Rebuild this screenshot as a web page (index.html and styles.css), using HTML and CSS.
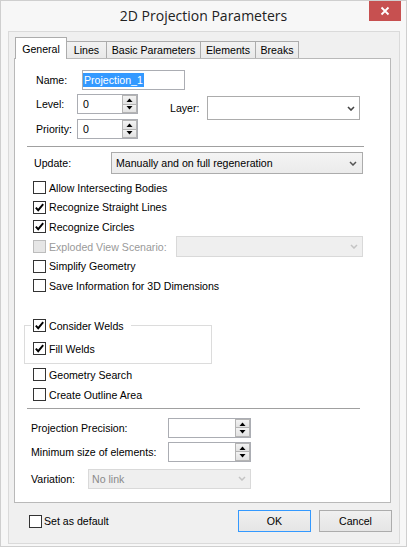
FILE: index.html
```html
<!DOCTYPE html>
<html>
<head>
<meta charset="utf-8">
<title>2D Projection Parameters</title>
<link rel="stylesheet" href="styles.css">
</head>
<body>
<div class="window">
  <div class="titlebar">
    <span></span>
    <div class="title">2D Projection Parameters</div>
    <div class="close"><svg width="10" height="10" viewBox="0 0 10 10"><path d="M1.5 1.5L8.5 8.5M8.5 1.5L1.5 8.5" stroke="#fff" stroke-width="1.8" fill="none"/></svg></div>
  </div>
  <div class="client">
    <div class="tabs">
      <div class="tab tab-active w-general">General</div>
      <div class="tab w-lines">Lines</div>
      <div class="tab w-basic">Basic Parameters</div>
      <div class="tab w-elements">Elements</div>
      <div class="tab w-breaks">Breaks</div>
    </div>
    <div class="panel">
      <div class="row-name">
        <span class="lbl-name">Name:</span>
        <div class="text-input name-input"><span class="sel-text">Projection_1</span></div>
      </div>
      <div class="lp-block">
        <div class="lp-left">
          <div class="lp-row">
            <span class="lbl-lp">Level:</span>
            <div class="spin-input w-lvl">
              <span class="val">0</span>
              <div class="spin">
                <div class="spin-btn"><svg width="7" height="4" viewBox="0 0 7 4"><path d="M0.5 4L3.5 0.5L6.5 4Z" fill="#000"/></svg></div>
                <div class="spin-btn"><svg width="7" height="4" viewBox="0 0 7 4"><path d="M0.5 0L3.5 3.5L6.5 0Z" fill="#000"/></svg></div>
              </div>
            </div>
          </div>
          <div class="lp-row">
            <span class="lbl-lp">Priority:</span>
            <div class="spin-input w-lvl">
              <span class="val">0</span>
              <div class="spin">
                <div class="spin-btn"><svg width="7" height="4" viewBox="0 0 7 4"><path d="M0.5 4L3.5 0.5L6.5 4Z" fill="#000"/></svg></div>
                <div class="spin-btn"><svg width="7" height="4" viewBox="0 0 7 4"><path d="M0.5 0L3.5 3.5L6.5 0Z" fill="#000"/></svg></div>
              </div>
            </div>
          </div>
        </div>
        <div class="layer">
          <span class="lbl-layer">Layer:</span>
          <div class="combo w-layer">
            <span></span>
            <svg width="8" height="5" viewBox="0 0 8 5"><path d="M1 1L4 4L7 1" stroke="#444" stroke-width="1.6" fill="none"/></svg>
          </div>
        </div>
      </div>
      <div class="sep sep-top"></div>
      <div class="update-row">
        <span class="lbl-update">Update:</span>
        <div class="combo dropdown w-update">
          <span>Manually and on full regeneration</span>
          <svg width="8" height="5" viewBox="0 0 8 5"><path d="M1 1L4 4L7 1" stroke="#555" stroke-width="1.5" fill="none"/></svg>
        </div>
      </div>
      <div class="checks">
        <div class="cb-row"><span class="cb"></span><span>Allow Intersecting Bodies</span></div>
        <div class="cb-row"><span class="cb"><svg width="11" height="11" viewBox="0 0 11 11"><path d="M1.8 5.6L4.2 8.2L9.2 2.2" stroke="#000" stroke-width="1.9" fill="none"/></svg></span><span>Recognize Straight Lines</span></div>
        <div class="cb-row"><span class="cb"><svg width="11" height="11" viewBox="0 0 11 11"><path d="M1.8 5.6L4.2 8.2L9.2 2.2" stroke="#000" stroke-width="1.9" fill="none"/></svg></span><span>Recognize Circles</span></div>
        <div class="cb-row disabled"><span class="cb"></span><span class="lbl-exploded">Exploded View Scenario:</span>
          <div class="combo dis-combo w-exploded"><span></span><svg width="8" height="5" viewBox="0 0 8 5"><path d="M1 1L4 4L7 1" stroke="#c4c4c4" stroke-width="1.5" fill="none"/></svg></div>
        </div>
        <div class="cb-row"><span class="cb"></span><span>Simplify Geometry</span></div>
        <div class="cb-row"><span class="cb"></span><span>Save Information for 3D Dimensions</span></div>
      </div>
      <fieldset class="group">
        <legend class="group-legend"><div class="cb-row cb-row-plain"><span class="cb"><svg width="11" height="11" viewBox="0 0 11 11"><path d="M1.8 5.6L4.2 8.2L9.2 2.2" stroke="#000" stroke-width="1.9" fill="none"/></svg></span><span>Consider Welds</span></div></legend>
        <div class="cb-row cb-row-plain fill-row"><span class="cb"><svg width="11" height="11" viewBox="0 0 11 11"><path d="M1.8 5.6L4.2 8.2L9.2 2.2" stroke="#000" stroke-width="1.9" fill="none"/></svg></span><span>Fill Welds</span></div>
      </fieldset>
      <div class="checks2">
        <div class="cb-row h20"><span class="cb"></span><span>Geometry Search</span></div>
        <div class="cb-row h20"><span class="cb"></span><span>Create Outline Area</span></div>
      </div>
      <div class="sep sep-bottom"></div>
      <div class="field-row fr-precision">
        <span class="lbl-field">Projection Precision:</span>
        <div class="spin-input w-prec">
          <span class="val"></span>
          <div class="spin">
            <div class="spin-btn"><svg width="7" height="4" viewBox="0 0 7 4"><path d="M0.5 4L3.5 0.5L6.5 4Z" fill="#000"/></svg></div>
            <div class="spin-btn"><svg width="7" height="4" viewBox="0 0 7 4"><path d="M0.5 0L3.5 3.5L6.5 0Z" fill="#000"/></svg></div>
          </div>
        </div>
      </div>
      <div class="field-row fr-min">
        <span class="lbl-field">Minimum size of elements:</span>
        <div class="spin-input w-prec">
          <span class="val"></span>
          <div class="spin">
            <div class="spin-btn"><svg width="7" height="4" viewBox="0 0 7 4"><path d="M0.5 4L3.5 0.5L6.5 4Z" fill="#000"/></svg></div>
            <div class="spin-btn"><svg width="7" height="4" viewBox="0 0 7 4"><path d="M0.5 0L3.5 3.5L6.5 0Z" fill="#000"/></svg></div>
          </div>
        </div>
      </div>
      <div class="field-row fr-var">
        <span class="lbl-var">Variation:</span>
        <div class="combo dis-combo w-var"><span class="dis-text">No link</span><svg width="8" height="5" viewBox="0 0 8 5"><path d="M1 1L4 4L7 1" stroke="#c4c4c4" stroke-width="1.5" fill="none"/></svg></div>
      </div>
    </div>
    <div class="footer">
      <div class="cb-row cb-row-plain footer-cb"><span class="cb"></span><span>Set as default</span></div>
      <div class="spacer"></div>
      <div class="btn btn-default">OK</div>
      <div class="btn">Cancel</div>
    </div>
  </div>
</div>
</body>
</html>
```
FILE: styles.css
```css
* { box-sizing: border-box; }
html, body { margin: 0; padding: 0; }
body {
  width: 407px;
  height: 547px;
  overflow: hidden;
  background: #f7f7f7;
  font-family: "Liberation Sans", Arial, sans-serif;
  font-size: 10.6px;
  color: #000;
}
.window {
  width: 407px;
  height: 547px;
  border: 1px solid #cfcfcf;
  background: #f7f7f7;
  display: flex;
  flex-direction: column;
}
.titlebar {
  flex: none;
  height: 30px;
  display: grid;
  grid-template-columns: 1fr auto 1fr;
}
.title {
  font-family: "Open Sans", "Noto Sans", sans-serif;
  font-size: 14px;
  color: #222;
  line-height: 30px;
  white-space: nowrap;
}
.close {
  justify-self: end;
  width: 32px;
  height: 20px;
  margin-right: 5px;
  background: #c75050;
  display: flex;
  align-items: center;
  justify-content: center;
}
.client {
  flex: none;
  margin: 0 6px 2px 7px;
  height: 513px;
  background: #f0f0f0;
  border: 1px solid #dadada;
  display: flex;
  flex-direction: column;
}
.tabs {
  flex: none;
  height: 26px;
  display: flex;
  align-items: flex-end;
  padding-left: 6px;
}
.tab {
  height: 17px;
  border: 1px solid #acacac;
  border-bottom: none;
  margin-right: -1px;
  background: linear-gradient(#f2f2f2, #e9e9e9);
  display: flex;
  align-items: center;
  justify-content: center;
  white-space: nowrap;
}
.tab-active {
  position: relative;
  z-index: 1;
  height: 22px;
  margin-bottom: -1px;
  background: #fff;
}
.w-general { width: 52px; }
.w-lines { width: 41px; }
.w-basic { width: 95px; }
.w-elements { width: 56px; }
.w-breaks { width: 44px; }

.panel {
  flex: none;
  margin-left: 5px;
  width: 377px;
  height: 445px;
  border: 1px solid #b9b9b9;
  background: #fff;
}

.row-name {
  display: flex;
  align-items: center;
  height: 20px;
  margin: 11px 0 0 21px;
}
.lbl-name { width: 46px; }
.text-input {
  height: 20px;
  border: 1px solid #abadb3;
  background: #fff;
}
.name-input {
  width: 103px;
  display: flex;
  align-items: center;
  padding-left: 0;
}
.sel-text {
  background: #3399ff;
  color: #fff;
  line-height: 14px;
  padding: 0 1px 0 1px;
}

.lp-block {
  display: flex;
  align-items: flex-start;
  margin: 4px 0 0 21px;
}
.lp-left {
  display: flex;
  flex-direction: column;
  gap: 5px;
}
.lp-row {
  display: flex;
  align-items: center;
  height: 20px;
}
.lbl-lp { width: 41px; }
.spin-input {
  height: 20px;
  border: 1px solid #abadb3;
  background: #fff;
  display: flex;
}
.w-lvl { width: 61px; }
.w-prec { width: 83px; }
.val {
  flex: 1;
  align-self: center;
  padding-left: 5px;
}
.spin {
  width: 15px;
  display: flex;
  flex-direction: column;
}
.spin-btn {
  flex: 1;
  border: 1px solid #b4b4b4;
  background: linear-gradient(#f3f3f3, #e2e2e2);
  display: flex;
  align-items: center;
  justify-content: center;
}
.spin-btn + .spin-btn { border-top: none; }

.layer {
  display: flex;
  align-items: center;
  margin: 2px 0 0 32px;
}
.lbl-layer { width: 37px; }
.combo {
  display: flex;
  align-items: center;
  justify-content: space-between;
  border: 1px solid #acacac;
  background: #fff;
  padding: 0 4px 0 3px;
  white-space: nowrap;
}
.w-layer { width: 153px; height: 24px; }

.sep {
  height: 0;
  border-top: 1px solid #a0a0a0;
  margin-left: 12px;
}
.sep-top { width: 337px; margin-top: 7px; }
.sep-bottom { width: 333px; margin-top: 3px; }

.update-row {
  display: flex;
  align-items: center;
  height: 22px;
  margin: 5px 0 0 19px;
}
.lbl-update { width: 77px; }
.dropdown {
  background: linear-gradient(#f4f4f4, #ebebeb);
  padding: 0 5px 0 4px;
}
.w-update { width: 252px; height: 22px; }

.checks { margin-top: 4px; }
.cb-row {
  display: flex;
  align-items: center;
  height: 19.6px;
  margin-left: 18px;
  white-space: nowrap;
}
.cb-row.h20 { height: 20px; }
.cb-row-plain { margin-left: 0; }
.cb {
  flex: none;
  width: 13px;
  height: 13px;
  border: 1px solid #333;
  background: #fff;
  margin-right: 3px;
  display: flex;
  align-items: center;
  justify-content: center;
}
.disabled { color: #9a9a9a; }
.disabled .cb { border-color: #bcbcbc; background: #e6e6e6; }
.lbl-exploded { width: 127px; }
.dis-combo {
  border-color: #d9d9d9;
  background: #efefef;
}
.w-exploded { width: 187px; height: 21px; }

.group {
  margin: 20.4px 0 0 9px;
  width: 188px;
  min-width: 0;
  border: 1px solid #dcdcdc;
  padding: 0 0 4px 6px;
}
.group-legend {
  padding: 0 7px 0 2px;
  margin: 0;
}
.group-legend .cb-row { height: 20px; }
.fill-row { height: 20px; margin: 3px 0 0 2px; }

.checks2 { margin-top: 1px; }

.field-row {
  display: flex;
  align-items: center;
  height: 20px;
  margin-left: 16px;
}
.fr-precision { margin-top: 9px; }
.fr-min { margin-top: 4px; }
.fr-var { margin-top: 7px; }
.lbl-field { width: 137px; }
.lbl-var { width: 57px; }
.w-var { width: 163px; height: 20px; }
.dis-text { color: #8a8a8a; }

.footer {
  flex: 1;
  display: flex;
  align-items: flex-start;
  padding: 7px 7px 0 20px;
}
.footer-cb { height: 22px; }
.footer-cb .cb { margin-right: 2px; }
.spacer { flex: 1; }
.btn {
  width: 73px;
  height: 22px;
  border: 1px solid #acacac;
  background: linear-gradient(#f0f0f0, #e5e5e5);
  display: flex;
  align-items: center;
  justify-content: center;
}
.btn-default {
  border-color: #3399ff;
  margin-right: 8px;
}
```
